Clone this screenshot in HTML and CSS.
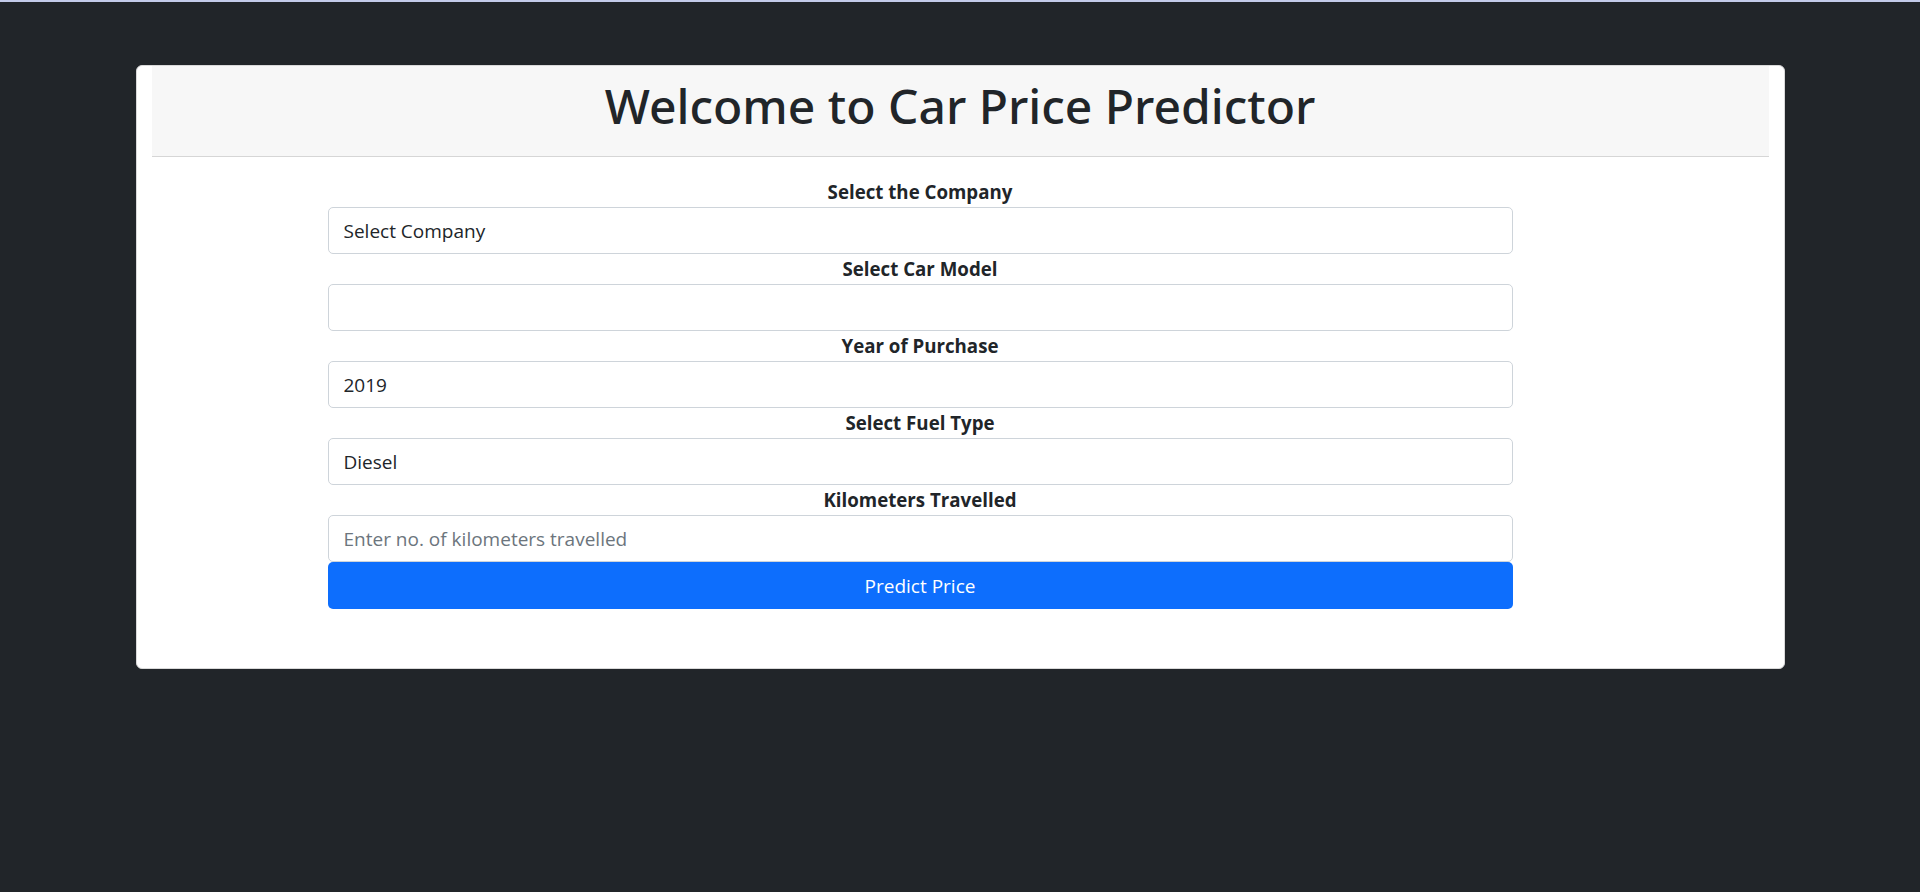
FILE: index.html
```html
<!DOCTYPE html>
<html lang="en">
<head>
<meta charset="utf-8">
<title>Car Price Predictor</title>
<link rel="stylesheet" href="styles.css">
</head>
<body>
<div class="card">
  <div class="card-inner">
    <div class="card-header">
      <h1 class="title">Welcome to Car Price Predictor</h1>
    </div>
    <div class="card-body">
      <form class="form">
        <label class="label">Select the Company</label>
        <select class="control"><option>Select Company</option></select>
        <label class="label">Select Car Model</label>
        <select class="control"><option></option></select>
        <label class="label">Year of Purchase</label>
        <select class="control"><option>2019</option></select>
        <label class="label">Select Fuel Type</label>
        <select class="control"><option>Diesel</option></select>
        <label class="label">Kilometers Travelled</label>
        <input class="control" type="text" placeholder="Enter no. of kilometers travelled">
        <button class="btn" type="button">Predict Price</button>
      </form>
    </div>
  </div>
</div>
</body>
</html>
```
FILE: styles.css
```css
html, body {
  margin: 0;
  padding: 0;
}
body {
  background: #212529;
  border-top: 2px solid #c3cbe9;
  min-height: 890px;
  font-family: "Open Sans", "Noto Sans", sans-serif;
  color: #212529;
}
.card {
  width: 1649px;
  box-sizing: border-box;
  margin: 63px auto 0;
  background: #fff;
  border: 1px solid #d9d9d9;
  border-radius: 6px;
}
.card-inner {
  padding: 0 15px;
}
.card-header {
  background: #f7f7f7;
  border-bottom: 1px solid #d6d6d6;
  padding: 10px 0 20px;
  text-align: center;
}
.title {
  margin: 0;
  font-family: "Noto Sans", "Open Sans", sans-serif;
  font-size: 48px;
  line-height: 60px;
  font-weight: 500;
  color: #212529;
}
.card-body {
  padding: 20px 0 59px;
}
.form {
  width: 1185px;
  margin-left: 176px;
  display: flex;
  flex-direction: column;
}
.label {
  display: block;
  text-align: center;
  font-weight: 700;
  font-size: 18.7px;
  line-height: 30px;
  height: 30px;
}
.control {
  display: block;
  box-sizing: border-box;
  width: 100%;
  height: 47px;
  margin: 0;
  padding: 0 15px;
  border: 1px solid #ced4da;
  border-radius: 5px;
  background: #fff;
  font-family: inherit;
  font-size: 19px;
  color: #212529;
  appearance: none;
  -webkit-appearance: none;
  outline: none;
}
.control::placeholder {
  color: #6c757d;
}
.btn {
  display: block;
  width: 100%;
  height: 47px;
  margin: 0;
  border: 0;
  border-radius: 5px;
  background: #0d6efd;
  color: #fff;
  font-family: inherit;
  font-size: 19px;
  cursor: pointer;
}
```
